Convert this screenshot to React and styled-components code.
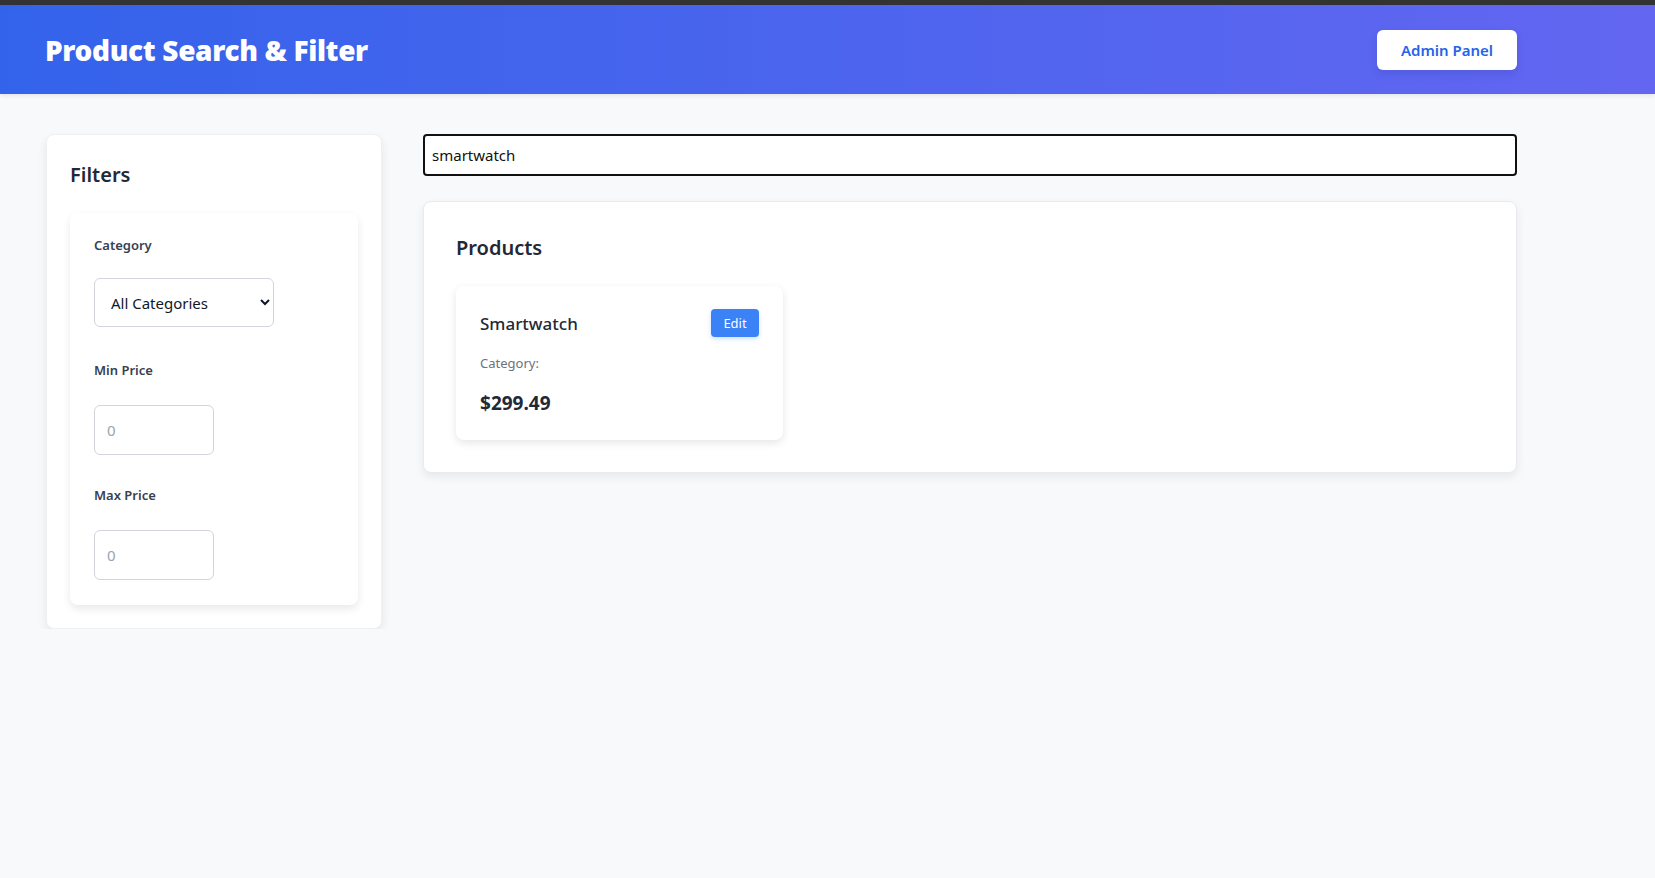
import React from 'react';
import styled, { createGlobalStyle } from 'styled-components';

const GlobalStyle = createGlobalStyle`
  html, body {
    margin: 0;
    padding: 0;
    background: #f8f9fb;
    font-family: "Noto Sans", "Open Sans", sans-serif;
    color: #1f2937;
  }
  * {
    box-sizing: border-box;
  }
`;

const TopStrip = styled.div`
  height: 5px;
  background: #333333;
`;

const Header = styled.header`
  height: 89px;
  display: flex;
  align-items: center;
  justify-content: space-between;
  padding: 0 138px 0 45px;
  background: linear-gradient(90deg, #3463eb 0%, #6366f1 100%);
  box-shadow: 0 2px 4px rgba(0, 0, 0, 0.08);
`;

const Title = styled.h1`
  margin: 0;
  font-size: 28px;
  font-weight: 900;
  color: #ffffff;
  letter-spacing: -0.35px;
`;

const AdminButton = styled.button`
  width: 140px;
  height: 40px;
  border: none;
  border-radius: 6px;
  background: #ffffff;
  color: #2563eb;
  font-family: inherit;
  font-size: 15px;
  font-weight: 600;
  box-shadow: 0 4px 8px rgba(30, 40, 120, 0.15);
  cursor: pointer;
`;

const Main = styled.main`
  display: flex;
  align-items: flex-start;
  gap: 41px;
  padding: 40px 138px 0 46px;
`;

const Sidebar = styled.aside`
  width: 336px;
  flex-shrink: 0;
  background: #ffffff;
  border: 1px solid #eef0f3;
  border-radius: 8px;
  padding: 26px 23px 23px;
  box-shadow: 0 4px 10px rgba(0, 0, 0, 0.08);
`;

const PanelTitle = styled.h2`
  margin: 0 0 ${(p) => p.$gap || 24}px;
  font-size: 20px;
  line-height: 28px;
  font-weight: 600;
  color: #1f2937;
`;

const FilterCard = styled.div`
  background: #ffffff;
  border-radius: 8px;
  padding: 22px 24px 25px;
  box-shadow: 0 4px 8px rgba(0, 0, 0, 0.09);
`;

const Field = styled.div`
  display: flex;
  flex-direction: column;
  align-items: flex-start;
  margin-top: ${(p) => p.$space || 0}px;
`;

const Label = styled.label`
  font-size: 13px;
  line-height: 20px;
  font-weight: 600;
  color: #374151;
  margin-bottom: 23px;
`;

const Select = styled.select`
  width: 180px;
  height: 49px;
  padding: 0 10px 0 12px;
  border: 1px solid #d1d5db;
  border-radius: 6px;
  background: #ffffff;
  font-family: inherit;
  font-size: 15px;
  color: #111827;
`;

const PriceInput = styled.input`
  width: 120px;
  height: 50px;
  margin-top: 2px;
  padding: 0 12px;
  border: 1px solid #d1d5db;
  border-radius: 6px;
  background: #ffffff;
  font-family: inherit;
  font-size: 15px;
  color: #111827;
  &::placeholder {
    color: #9ca3af;
  }
`;

const Content = styled.section`
  flex: 1;
  min-width: 0;
`;

const SearchInput = styled.input`
  display: block;
  width: 100%;
  height: 42px;
  padding: 0 7px;
  margin-bottom: 25px;
  border: 2px solid #111111;
  border-radius: 4px;
  background: #ffffff;
  font-family: inherit;
  font-size: 15px;
  color: #111111;
  outline: none;
`;

const ProductsPanel = styled.div`
  background: #ffffff;
  border: 1px solid #e8eaee;
  border-radius: 8px;
  padding: 32px;
  box-shadow: 0 4px 10px rgba(0, 0, 0, 0.07);
`;

const Grid = styled.div`
  display: grid;
  grid-template-columns: repeat(3, 1fr);
  gap: 24px;
`;

const Card = styled.div`
  background: #ffffff;
  border-radius: 8px;
  padding: 23px 24px 23px;
  box-shadow: 0 3px 8px rgba(0, 0, 0, 0.1);
`;

const CardHead = styled.div`
  display: flex;
  align-items: center;
  justify-content: space-between;
  margin-bottom: 16px;
`;

const ProductName = styled.h3`
  margin: 0;
  font-size: 17px;
  font-weight: 500;
  color: #1f2937;
`;

const EditButton = styled.button`
  height: 28px;
  padding: 0 12px;
  border: none;
  border-radius: 4px;
  background: #3b82f6;
  color: #ffffff;
  font-family: inherit;
  font-size: 13px;
  box-shadow: 0 2px 4px rgba(59, 130, 246, 0.25);
  cursor: pointer;
`;

const Meta = styled.p`
  margin: 0 0 16px;
  font-size: 13px;
  line-height: 20px;
  color: #6b7280;
`;

const Price = styled.p`
  margin: 0;
  font-size: 19px;
  line-height: 28px;
  font-weight: 700;
  color: #1f2937;
`;

const products = [{ name: 'Smartwatch', category: '', price: 299.49 }];

export default function App() {
  return (
    <>
      <GlobalStyle />
      <TopStrip />
      <Header>
        <Title>Product Search &amp; Filter</Title>
        <AdminButton>Admin Panel</AdminButton>
      </Header>
      <Main>
        <Sidebar>
          <PanelTitle $gap={24}>Filters</PanelTitle>
          <FilterCard>
            <Field>
              <Label>Category</Label>
              <Select defaultValue="all">
                <option value="all">All Categories</option>
                <option value="electronics">Electronics</option>
                <option value="clothing">Clothing</option>
              </Select>
            </Field>
            <Field $space={33}>
              <Label>Min Price</Label>
              <PriceInput type="number" placeholder="0" />
            </Field>
            <Field $space={30}>
              <Label>Max Price</Label>
              <PriceInput type="number" placeholder="0" />
            </Field>
          </FilterCard>
        </Sidebar>
        <Content>
          <SearchInput type="text" defaultValue="smartwatch" />
          <ProductsPanel>
            <PanelTitle $gap={24}>Products</PanelTitle>
            <Grid>
              {products.map((p) => (
                <Card key={p.name}>
                  <CardHead>
                    <ProductName>{p.name}</ProductName>
                    <EditButton>Edit</EditButton>
                  </CardHead>
                  <Meta>Category: {p.category}</Meta>
                  <Price>${p.price.toFixed(2)}</Price>
                </Card>
              ))}
            </Grid>
          </ProductsPanel>
        </Content>
      </Main>
    </>
  );
}
